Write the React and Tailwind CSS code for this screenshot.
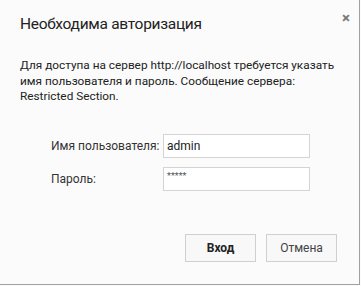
import React from 'react';

export default function App() {
  return (
    <div className="w-[361px] h-[286px] bg-[#fbfbfb] relative" style={{ fontFamily: 'Roboto, "Noto Sans", sans-serif' }}>
      <div className="w-[360px] h-[285px] border-r border-b border-[#a0a0a0] flex flex-col">
        <div className="flex items-start justify-between pl-5 pr-[9px] pt-[12px]">
          <h1 className="text-[15.5px] tracking-[-0.3px] leading-[24px] text-[#222] font-normal">Необходима авторизация</h1>
          <span className="text-[#777] text-[15px] leading-[15px] font-bold -mt-[1px]">×</span>
        </div>

        <p className="mt-[22px] px-5 text-[11.8px] leading-[15.5px] text-[#222] whitespace-nowrap">
          Для доступа на сервер http://localhost требуется указать
          <br />
          имя пользователя и пароль. Сообщение сервера:
          <br />
          Restricted Section.
        </p>

        <div className="mt-[29px] flex flex-col gap-[9px] pl-[51px]">
          <div className="flex items-center">
            <label className="w-[112px] text-[12px] text-[#333]">Имя пользователя:</label>
            <input
              type="text"
              defaultValue="admin"
              className="w-[147px] h-[24px] border border-[#d4d4d4] bg-white px-[3px] text-[12px] text-[#222] outline-none"
            />
          </div>
          <div className="flex items-center">
            <label className="w-[112px] text-[12px] text-[#333]">Пароль:</label>
            <input
              type="text"
              defaultValue="*****"
              className="w-[147px] h-[24px] border border-[#d4d4d4] bg-white px-[3px] pb-[6px] text-[9px] text-[#555] outline-none"
            />
          </div>
        </div>

        <div className="mt-auto mb-[22px] flex justify-end gap-[10px] pr-[22px]">
          <button className="w-[71px] h-[28px] border border-[#cfcfcf] bg-[#f8f8f8] text-[12px] font-bold text-[#222]">Вход</button>
          <button className="w-[71px] h-[28px] border border-[#cfcfcf] bg-[#f8f8f8] text-[12px] text-[#444]">Отмена</button>
        </div>
      </div>
    </div>
  );
}
